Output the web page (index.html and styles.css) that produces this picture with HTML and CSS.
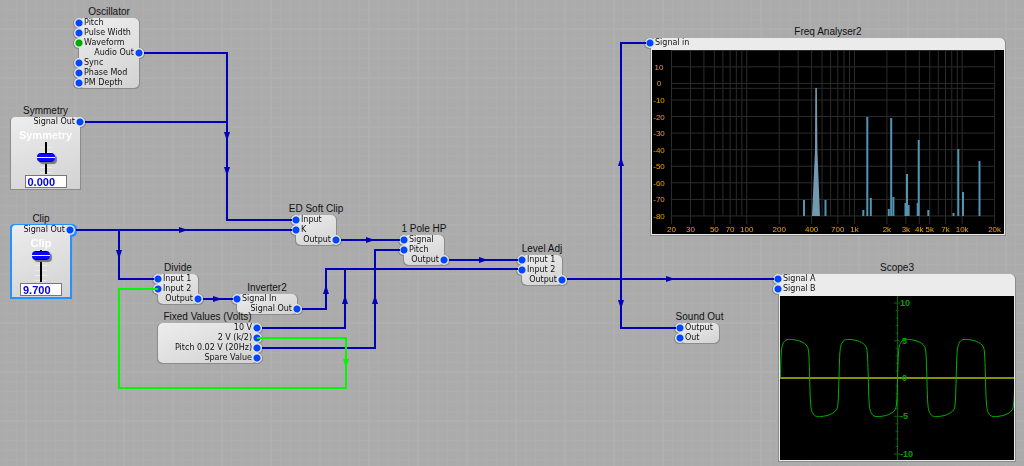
FILE: index.html
```
<!DOCTYPE html>
<html lang="en">
<head>
  <meta charset="UTF-8" />
  <title>Soft Clip Patch</title>
  <link rel="stylesheet" href="styles.css">
</head>
<body>

<main class="patch">

  <section class="node" id="oscillator">
    <h2>Oscillator</h2>
    <div class="box">
      <div class="row in"><i class="pin"></i>Pitch</div>
      <div class="row in"><i class="pin"></i>Pulse Width</div>
      <div class="row in"><i class="pin green"></i>Waveform</div>
      <div class="row out">Audio Out<i class="pin"></i></div>
      <div class="row in"><i class="pin"></i>Sync</div>
      <div class="row in"><i class="pin"></i>Phase Mod</div>
      <div class="row in"><i class="pin"></i>PM Depth</div>
    </div>
  </section>

  <section class="node" id="symmetry">
    <h2>Symmetry</h2>
    <div class="box control">
      <div class="row out">Signal Out<i class="pin"></i></div>
      <label class="caption" for="symmetry-slider">Symmetry</label>
      <input class="slider" id="symmetry-slider" type="range" min="0" max="100" value="52">
      <input class="value" type="text" value="0.000" aria-label="Symmetry value">
    </div>
  </section>

  <section class="node" id="clip">
    <h2>Clip</h2>
    <div class="box control selected">
      <div class="row out">Signal Out<i class="pin"></i></div>
      <label class="caption" for="clip-slider">Clip</label>
      <input class="slider" id="clip-slider" type="range" min="0" max="100" value="97">
      <input class="value" type="text" value="9.700" aria-label="Clip value">
    </div>
  </section>

  <section class="node" id="divide">
    <h2>Divide</h2>
    <div class="box">
      <div class="row in"><i class="pin"></i>Input 1</div>
      <div class="row in"><i class="pin"></i>Input 2</div>
      <div class="row out">Output<i class="pin"></i></div>
    </div>
  </section>

  <section class="node" id="inverter">
    <h2>Inverter2</h2>
    <div class="box">
      <div class="row in"><i class="pin"></i>Signal In</div>
      <div class="row out">Signal Out<i class="pin"></i></div>
    </div>
  </section>

  <section class="node" id="fixed">
    <h2>Fixed Values (Volts)</h2>
    <div class="box">
      <div class="row out">10 V<i class="pin"></i></div>
      <div class="row out">2 V (k/2)<i class="pin"></i></div>
      <div class="row out">Pitch 0.02 V (20Hz)<i class="pin"></i></div>
      <div class="row out">Spare Value<i class="pin"></i></div>
    </div>
  </section>

  <section class="node" id="softclip">
    <h2>ED Soft Clip</h2>
    <div class="box">
      <div class="row in"><i class="pin"></i>Input</div>
      <div class="row in"><i class="pin"></i>K</div>
      <div class="row out">Output<i class="pin"></i></div>
    </div>
  </section>

  <section class="node" id="highpass">
    <h2>1 Pole HP</h2>
    <div class="box">
      <div class="row in"><i class="pin"></i>Signal</div>
      <div class="row in"><i class="pin"></i>Pitch</div>
      <div class="row out">Output<i class="pin"></i></div>
    </div>
  </section>

  <section class="node" id="level">
    <h2>Level Adj</h2>
    <div class="box">
      <div class="row in"><i class="pin"></i>Input 1</div>
      <div class="row in"><i class="pin"></i>Input 2</div>
      <div class="row out">Output<i class="pin"></i></div>
    </div>
  </section>

  <section class="node" id="sound">
    <h2>Sound Out</h2>
    <div class="box">
      <div class="row in"><i class="pin"></i>Output</div>
      <div class="row in"><i class="pin"></i>Out</div>
    </div>
  </section>

  <section class="node" id="analyser">
    <h2>Freq Analyser2</h2>
    <div class="box display">
      <div class="row in"><i class="pin"></i>Signal in</div>
      <svg class="screen" id="spectrum" viewBox="0 0 352 184">
        <g id="spectrum-grid"></g>
        <g id="spectrum-bars"></g>
        <path class="peak" d="M160 166 L163 100 L163.3 38 H164.9 L165.4 100 L168 166 Z" />
        <g id="spectrum-labels"></g>
      </svg>
    </div>
  </section>

  <section class="node" id="scope">
    <h2>Scope3</h2>
    <div class="box display">
      <div class="row in"><i class="pin"></i>Signal A</div>
      <div class="row in"><i class="pin"></i>Signal B</div>
      <svg class="screen" viewBox="0 0 234 164">
        <defs>
          <path id="cycle" d="M0 0 C.6 -26 1 -32 3 -35 C5 -39 8 -38.7 11 -38.5 C18 -38 24 -36 27 -31.5 C28.9 -28 28.7 -15 29.3 0 C29.9 26 30.3 32 32.3 35 C34.3 39 37.3 38.7 40.3 38.5 C47.3 38 53.3 36 56.3 31.5 C58.2 28 58 15 58.6 0" />
        </defs>
        <g id="scope-axis"></g>
        <path class="zero" d="M0 82 H234" />
        <g class="trace">
          <use href="#cycle" x="0.4" y="82" />
          <use href="#cycle" x="59" y="82" />
          <use href="#cycle" x="117.6" y="82" />
          <use href="#cycle" x="176.2" y="82" />
        </g>
        <g class="scope-labels">
          <text x="120" y="10">10</text>
          <text x="122" y="48">5</text>
          <text x="122" y="85">0</text>
          <text x="120" y="123">-5</text>
          <text x="120" y="161">-10</text>
        </g>
      </svg>
    </div>
  </section>

  <svg class="wires" width="100%" height="100%">
    <defs>
      <path id="arrow" d="M-4 -3 L5 0 L-4 3 Z" />
    </defs>
    <g class="wire">
      <path d="M144 53 H227 V220 H292" />
      <path d="M85 122 H227" />
      <path d="M76 230 H292" />
      <path d="M119 230 V279 H154" />
      <path d="M203 299 H233" />
      <path d="M302 309 H326 V269 H518" />
      <path d="M262 328 H345 V269" />
      <path d="M262 348 H375 V250 H400" />
      <path d="M341 240 H400" />
      <path d="M449 260 H518" />
      <path d="M567 279 H774" />
      <path d="M646 43 H621 V328 H676" />
    </g>
    <path class="wire live" d="M257 338 H346 V388 H119 V289 H158" />
    <g class="arrows">
      <use href="#arrow" transform="translate(183 230)" />
      <use href="#arrow" transform="translate(217 299)" />
      <use href="#arrow" transform="translate(370 240)" />
      <use href="#arrow" transform="translate(483 260)" />
      <use href="#arrow" transform="translate(670 279)" />
      <use href="#arrow" transform="translate(227 136) rotate(90)" />
      <use href="#arrow" transform="translate(227 171) rotate(90)" />
      <use href="#arrow" transform="translate(119 254) rotate(90)" />
      <use href="#arrow" transform="translate(621 304) rotate(90)" />
      <use href="#arrow" transform="translate(326 290) rotate(-90)" />
      <use href="#arrow" transform="translate(345 300) rotate(-90)" />
      <use href="#arrow" transform="translate(375 300) rotate(-90)" />
      <use href="#arrow" transform="translate(621 162) rotate(-90)" />
      <use class="live" href="#arrow" transform="translate(346 363) rotate(90)" />
    </g>
  </svg>
</main>

<script>
  const NS = "http://www.w3.org/2000/svg";

  function draw(parent, name, attrs, text) {
    const el = document.createElementNS(NS, name);
    for (const key in attrs) el.setAttribute(key, attrs[key]);
    if (text !== undefined) el.textContent = text;
    document.getElementById(parent).appendChild(el);
  }

  // Log frequency scale, 20 Hz to 20 kHz
  const freqX = f => 19.5 + 107.7 * Math.log10(f / 20);
  const levelY = db => 33.4 - db * 1.657;

  const labelled = {
    20: '20', 30: '30', 50: '50', 70: '70', 100: '100', 200: '200', 400: '400', 700: '700',
    1000: '1k', 2000: '2k', 3000: '3k', 4000: '4k', 5000: '5k', 7000: '7k', 10000: '10k', 20000: '20k'
  };

  for (let decade = 10; decade <= 10000; decade *= 10) {
    for (let n = 1; n < 10; n++) {
      const f = n * decade;
      if (f < 20 || f > 20000) continue;
      const x = freqX(f);
      draw('spectrum-grid', 'line', { x1: x, x2: x, y1: 0, y2: labelled[f] ? 174 : 166 });
      if (labelled[f]) draw('spectrum-labels', 'text', { x: x, y: 182 }, labelled[f]);
    }
  }

  for (let db = 10; db >= -80; db -= 10) {
    const y = levelY(db);
    draw('spectrum-grid', 'line', { x1: 19, x2: 343, y1: y, y2: y });
    draw('spectrum-labels', 'text', { x: 7, y: y + 3 }, db);
  }
  draw('spectrum-grid', 'line', { x1: 19, x2: 343, y1: 0.5, y2: 0.5 });
  draw('spectrum-grid', 'line', { x1: 19, x2: 343, y1: 38.3, y2: 38.3 });

  // Harmonics: [x, top]
  const bars = [
    [152, 150], [173.5, 150], [211.3, 160], [215.3, 67], [218.8, 148], [236.8, 159],
    [239.2, 68], [241.4, 147], [253.5, 153], [255, 124], [256.6, 155], [265.7, 153],
    [266.7, 90], [276.3, 160], [301.5, 163], [306.3, 99], [311, 142], [327.5, 111]
  ];
  for (const [x, top] of bars) {
    draw('spectrum-bars', 'line', { x1: x, x2: x, y1: top, y2: 166 });
  }

  // Scope axis with a tick for each volt
  draw('scope-axis', 'line', { x1: 117.5, x2: 117.5, y1: 0, y2: 164 });
  for (let v = -10; v <= 10; v++) {
    const y = 82.5 - v * 7.55;
    const half = v % 5 === 0 ? 3 : 1.5;
    draw('scope-axis', 'line', { x1: 117 - half, x2: 117 + half, y1: y, y2: y });
  }
</script>

</body>
</html>
```
FILE: styles.css
```
* {
  box-sizing: border-box;
}

body {
  margin: 0;
  background: #ababab;
  font-family: "DejaVu Sans", Verdana, sans-serif;
  font-size: 8px;
  line-height: 10px;
  color: #111;
}

.patch {
  position: relative;
  min-height: 100vh;
  overflow: hidden;
  background-image:
    linear-gradient(90deg, #afafaf 2px, transparent 2px),
    linear-gradient(#afafaf 2px, transparent 2px),
    linear-gradient(90deg, transparent 10px, #aeaeae 10px 11px, transparent 11px 20px, #aeaeae 20px 21px, transparent 21px 30px, #aeaeae 30px 31px, transparent 31px 40px, #aeaeae 40px 41px, transparent 41px),
    linear-gradient(transparent 10px, #aeaeae 10px 11px, transparent 11px 20px, #aeaeae 20px 21px, transparent 21px 30px, #aeaeae 30px 31px, transparent 31px 40px, #aeaeae 40px 41px, transparent 41px);
  background-size: 49px 49px;
  background-position: 25px 28px;
}

/* Nodes */
.node {
  position: absolute;
  display: flex;
  flex-direction: column;
  align-items: center;
}

.node h2 {
  margin: 0;
  padding-top: 1px;
  font-family: "Liberation Sans", Arial, sans-serif;
  font-size: 10px;
  line-height: 13px;
  font-weight: normal;
  white-space: nowrap;
}

/* The outline follows the pins as well as the box */
.box {
  width: 100%;
  border-radius: 5px;
  background: linear-gradient(160deg, #ededed, #d2d2d2);
  filter: drop-shadow(1px 0 0 #8c8c8c) drop-shadow(-1px 0 0 #8c8c8c) drop-shadow(0 1px 0 #8c8c8c);
}

.row {
  display: flex;
  align-items: center;
  height: 10px;
  white-space: nowrap;
}

.out {
  justify-content: flex-end;
}

.pin {
  flex: none;
  width: 10px;
  height: 10px;
  border-radius: 50%;
  background: radial-gradient(circle, #0046ff 3px, #e4e4e4 4px);
}

.pin.green {
  background: radial-gradient(circle, #00aa00 3px, #e4e4e4 4px);
}

.in .pin {
  margin-left: -5px;
}

.out .pin {
  margin-right: -5px;
}

/* Slider nodes */
.control {
  display: flex;
  flex-direction: column;
  align-items: center;
  padding-bottom: 1px;
  border-radius: 4px 4px 0 0;
}

.control .row {
  width: 100%;
}

.selected {
  filter: drop-shadow(2px 0 0 #2492ff) drop-shadow(-2px 0 0 #2492ff) drop-shadow(0 2px 0 #2492ff) drop-shadow(0 -1px 0 #2492ff);
}

.caption {
  padding-top: 1px;
  font-family: "Liberation Sans", Arial, sans-serif;
  font-size: 11px;
  line-height: 14px;
  font-weight: bold;
  color: #fff;
}

.slider {
  appearance: none;
  writing-mode: vertical-lr;
  direction: rtl;
  width: 20px;
  height: 32px;
  margin: 0 0 1px;
  background:
    linear-gradient(#000, #000) center / 2px 32px no-repeat,
    repeating-linear-gradient(transparent 0 4px, #ececec 4px 5px) center / 12px 30px no-repeat;
}

.slider::-webkit-slider-runnable-track {
  width: 20px;
  height: 32px;
  background: none;
}

.slider::-webkit-slider-thumb {
  appearance: none;
  width: 18px;
  height: 9px;
  margin-left: 1px;
  border-radius: 4px;
  background: linear-gradient(#000070 0 1px, #0808ff 1px 4px, #f0f0ff 4px 5px, #0808ff 5px 8px, #000070 8px);
  box-shadow: 2px 2px 1px #777;
}

.value {
  width: 42px;
  height: 13px;
  padding: 0 2px;
  border: 1px solid #777;
  background: #fff;
  font-family: "Liberation Sans", Arial, sans-serif;
  font-size: 11px;
  font-weight: bold;
  color: #0000e6;
}

/* Analyser and scope */
.display {
  padding: 0 1px 1px;
  border-radius: 5px 5px 0 0;
  background: #ebebeb;
}

.display .in .pin {
  margin-left: -7px;
}

.screen {
  display: block;
  width: 100%;
  margin-top: 2px;
  background: #000;
}

#spectrum-grid line {
  stroke: #2c2c2c;
}

#spectrum-bars line {
  stroke: #5294b2;
  stroke-width: 2;
}

.peak {
  fill: #7399b0;
}

#spectrum-labels text {
  font: 8px "Liberation Sans", Arial, sans-serif;
  fill: #f0a400;
  text-anchor: middle;
}

#scope-axis line {
  stroke: #006a00;
}

.zero {
  stroke: #8c9000;
  stroke-width: 2;
}

.trace {
  fill: none;
  stroke: #00b400;
}

.scope-labels text {
  font: bold 9px "Liberation Sans", Arial, sans-serif;
  fill: #00a800;
}

/* Wires */
.wires {
  position: absolute;
  top: 0;
  left: 0;
  pointer-events: none;
}

.wire {
  fill: none;
  stroke: #0000b8;
  stroke-width: 2;
}

.wire.live {
  stroke: #00f800;
}

.arrows {
  fill: #0000b8;
}

.arrows .live {
  fill: #00f800;
}

/* Node places on the patch */
#oscillator {
  left: 79px;
  top: 4px;
  width: 60px;
}

#symmetry {
  left: 11px;
  top: 103px;
  width: 69px;
}

#clip {
  left: 12px;
  top: 211px;
  width: 58px;
}

#divide {
  left: 158px;
  top: 260px;
  width: 40px;
}

#inverter {
  left: 237px;
  top: 280px;
  width: 60px;
}

#fixed {
  left: 158px;
  top: 309px;
  width: 99px;
}

#softclip {
  left: 296px;
  top: 201px;
  width: 40px;
}

#highpass {
  left: 404px;
  top: 221px;
  width: 40px;
}

#level {
  left: 522px;
  top: 241px;
  width: 40px;
}

#sound {
  left: 680px;
  top: 309px;
  width: 39px;
}

#analyser {
  left: 651px;
  top: 24px;
  width: 354px;
}

#scope {
  left: 779px;
  top: 260px;
  width: 236px;
}
```
